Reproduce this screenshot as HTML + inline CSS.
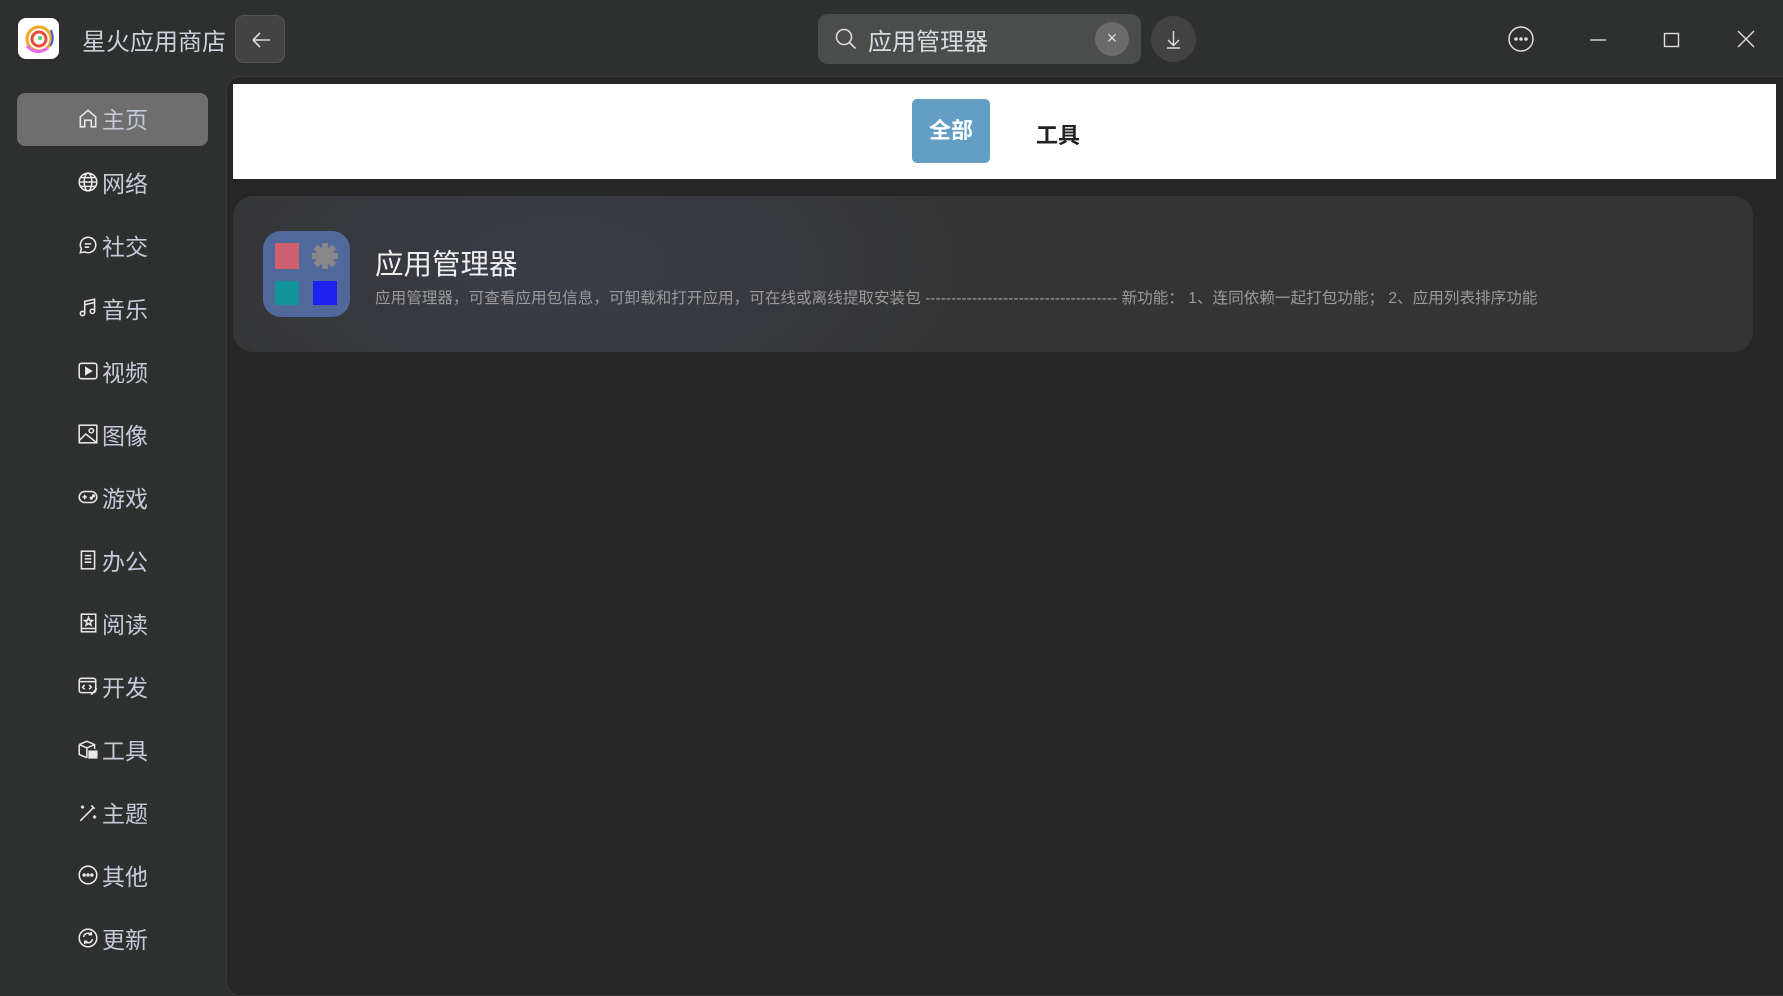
<!DOCTYPE html>
<html><head><meta charset="utf-8"><style>
*{margin:0;padding:0;box-sizing:border-box}
body{width:1783px;height:984px;background:#2e2f2f;font-family:"Liberation Sans","Noto Sans CJK SC",sans-serif;position:relative;overflow:hidden;color:#c9cdd8}
.abs{position:absolute}
.title{left:82px;top:22px;font-size:24px;color:#ccd0da}
.btn{background:#434343;border:1px solid #555;border-radius:9px}
.nav{position:absolute;left:17px;width:191px;height:53px;display:flex;align-items:center;justify-content:center;font-size:23px;color:#c5cad8;padding-bottom:3px}
.nav svg{width:22px;height:22px;margin-right:3px;stroke:#e8e8e8;fill:none;stroke-width:1.4;flex:none}
.panel{left:226px;top:76px;width:1570px;height:920px;background:#262626;border-radius:14px;border:1px solid #3a3a3a}
</style></head><body>
<div class="abs" style="left:18px;top:18px;width:41px;height:41px;background:#fff;border-radius:8px">
<svg width="41" height="41" viewBox="0 0 41 41"><circle cx="21" cy="21" r="12" fill="none" stroke="#f5a623" stroke-width="3"/><circle cx="21" cy="21" r="7" fill="none" stroke="#e74c3c" stroke-width="3"/><path d="M9 28 Q18 38 30 30" stroke="#e86af0" stroke-width="3" fill="none"/><path d="M33 12 Q37 22 32 28" stroke="#3b5bdb" stroke-width="2" fill="none"/><circle cx="22" cy="20" r="2" fill="#4cd964"/></svg></div>
<div class="abs title">星火应用商店</div>
<div class="abs btn" style="left:235px;top:15px;width:50px;height:48px"><svg width="50" height="48"><path d="M17 24h17M17 24l7-7M17 24l7 7" stroke="#ddd" stroke-width="1.6" fill="none"/></svg></div>
<div class="abs" style="left:818px;top:14px;width:323px;height:50px;background:#4b4c4c;border-radius:10px"></div>
<svg class="abs" style="left:834px;top:27px" width="24" height="24"><circle cx="10" cy="10" r="7.5" stroke="#ddd" stroke-width="1.6" fill="none"/><path d="M15.5 15.5l6 6" stroke="#ddd" stroke-width="1.6"/></svg>
<div class="abs" style="left:868px;top:22px;font-size:24px;color:#d8dbe2">应用管理器</div>
<div class="abs" style="left:1095px;top:22px;width:34px;height:34px;border-radius:50%;background:#6b6b6b;color:#ddd;font-size:18px;text-align:center;line-height:33px">×</div>
<div class="abs" style="left:1151px;top:16px;width:45px;height:46px;border-radius:50%;background:#424242"><svg width="45" height="46"><path d="M22.5 15v14M17 24l5.5 5.5L28 24M16 32h13" stroke="#ddd" stroke-width="1.4" fill="none"/></svg></div>
<svg class="abs" style="left:1506px;top:25px" width="30" height="30"><circle cx="15" cy="14" r="12" stroke="#ddd" stroke-width="1.5" fill="none"/><circle cx="10" cy="14" r="1.8" fill="#ddd"/><circle cx="15" cy="14" r="1.8" fill="#ddd"/><circle cx="20" cy="14" r="1.8" fill="#ddd"/></svg>
<svg class="abs" style="left:1588px;top:30px" width="20" height="20"><path d="M2 10h16" stroke="#ddd" stroke-width="1.4"/></svg>
<svg class="abs" style="left:1662px;top:30px" width="20" height="20"><rect x="2.5" y="3.5" width="14" height="13" stroke="#ddd" stroke-width="1.4" fill="none"/></svg>
<svg class="abs" style="left:1736px;top:29px" width="20" height="20"><path d="M2 2l16 16M18 2L2 18" stroke="#ddd" stroke-width="1.4"/></svg>

<div class="abs" style="left:17px;top:93px;width:191px;height:53px;background:#6e6e6e;border-radius:8px"></div>
<div class="nav" style="top:93px"><svg viewBox="0 0 20 20"><path d="M3 9l7-6 7 6v9h-4v-6H7v6H3z"/></svg>主页</div>
<div class="nav" style="top:157px"><svg viewBox="0 0 20 20"><circle cx="10" cy="10" r="8"/><ellipse cx="10" cy="10" rx="3.5" ry="8"/><path d="M2 10h16M3.5 6h13M3.5 14h13"/></svg>网络</div>
<div class="nav" style="top:220px"><svg viewBox="0 0 20 20"><path d="M10 3a7 7 0 1 1-3 13.3L3 17l1-3.5A7 7 0 0 1 10 3zM7 9h6M7 12h4"/></svg>社交</div>
<div class="nav" style="top:283px"><svg viewBox="0 0 20 20"><path d="M7 15V4l9-2v11"/><circle cx="5" cy="15" r="2"/><circle cx="14" cy="13" r="2"/><path d="M7 7l9-2"/></svg>音乐</div>
<div class="nav" style="top:346px"><svg viewBox="0 0 20 20"><rect x="2" y="3" width="16" height="14" rx="2"/><path d="M8 7v6l5-3z" fill="#e8e8e8"/></svg>视频</div>
<div class="nav" style="top:409px"><svg viewBox="0 0 20 20"><rect x="2" y="2" width="16" height="16"/><path d="M2 16l6-6 10 8"/><circle cx="13" cy="7" r="2"/></svg>图像</div>
<div class="nav" style="top:472px"><svg viewBox="0 0 20 20"><rect x="2" y="5" width="16" height="10" rx="5"/><path d="M5 10h4M7 8v4"/><circle cx="13" cy="11" r=".8"/><circle cx="15" cy="9" r=".8"/></svg>游戏</div>
<div class="nav" style="top:535px"><svg viewBox="0 0 20 20"><rect x="4" y="2" width="12" height="16"/><path d="M7 6h6M7 9h6M7 12h6"/></svg>办公</div>
<div class="nav" style="top:598px"><svg viewBox="0 0 20 20"><rect x="4" y="2" width="13" height="16"/><path d="M4 15h13M10.5 5l1 2.5 2.5.3-2 1.6.7 2.6-2.2-1.4-2.2 1.4.7-2.6-2-1.6 2.5-.3z"/></svg>阅读</div>
<div class="nav" style="top:661px"><svg viewBox="0 0 20 20"><rect x="2" y="3" width="15" height="13" rx="2"/><path d="M2 6h15M7 9l-2 2 2 2M11 9l2 2-2 2M13 18l5-6"/></svg>开发</div>
<div class="nav" style="top:724px"><svg viewBox="0 0 20 20"><path d="M2 6l7-3 7 3v4M2 6v9l7 3M2 6l7 3 7-3M9 9v9"/><rect x="11" y="12" width="7" height="6" fill="#e8e8e8"/></svg>工具</div>
<div class="nav" style="top:787px"><svg viewBox="0 0 20 20"><path d="M3 18L15 6M13 4l3 3M5 4v3M3.5 5.5h3M16 13v3M14.5 14.5h3"/></svg>主题</div>
<div class="nav" style="top:850px"><svg viewBox="0 0 20 20"><circle cx="10" cy="10" r="8"/><circle cx="6.5" cy="10" r=".9" fill="#e8e8e8"/><circle cx="10" cy="10" r=".9" fill="#e8e8e8"/><circle cx="13.5" cy="10" r=".9" fill="#e8e8e8"/></svg>其他</div>
<div class="nav" style="top:913px"><svg viewBox="0 0 20 20"><circle cx="10" cy="10" r="8"/><path d="M6 9a4 4 0 0 1 7-2M14 11a4 4 0 0 1-7 2M13 4.5V7h-2.5M7 15.5V13h2.5"/></svg>更新</div>

<div class="abs panel"></div>
<div class="abs" style="left:233px;top:84px;width:1543px;height:95px;background:#fff"></div>
<div class="abs" style="left:912px;top:99px;width:78px;height:64px;background:#639ec4;border-radius:5px;color:#fff;font-weight:bold;font-size:22px;text-align:center;line-height:64px">全部</div>
<div class="abs" style="left:1036px;top:118px;font-weight:bold;font-size:22px;color:#222">工具</div>

<div class="abs" style="left:233px;top:196px;width:1520px;height:156px;border-radius:20px;background:radial-gradient(ellipse 420px 200px at 330px 70px,#3a3d48,#343434 100%),#343434"></div>
<div class="abs" style="left:263px;top:231px;width:87px;height:86px;background:#50699a;border-radius:18px"></div>
<div class="abs" style="left:275px;top:243px;width:24px;height:26px;background:#d06070"></div>
<svg class="abs" style="left:309px;top:240px" width="32" height="32"><circle cx="16" cy="16" r="9" fill="#888"/><g fill="#888"><rect x="13" y="3" width="6" height="26"/><rect x="3" y="13" width="26" height="6"/><rect x="13" y="3" width="6" height="26" transform="rotate(45 16 16)"/><rect x="13" y="3" width="6" height="26" transform="rotate(-45 16 16)"/></g></svg>
<div class="abs" style="left:275px;top:281px;width:24px;height:24px;background:#119399"></div>
<div class="abs" style="left:313px;top:281px;width:24px;height:24px;background:#1c22ee"></div>
<div class="abs" style="left:375px;top:242px;font-size:28.5px;color:#eeeeee">应用管理器</div>
<div class="abs" style="left:375px;top:286px;font-size:15.6px;color:#9a9a9a;white-space:nowrap">应用管理器，可查看应用包信息，可卸载和打开应用，可在线或离线提取安装包 ------------------------------------- 新功能： 1、连同依赖一起打包功能； 2、应用列表排序功能</div>
</body></html>
